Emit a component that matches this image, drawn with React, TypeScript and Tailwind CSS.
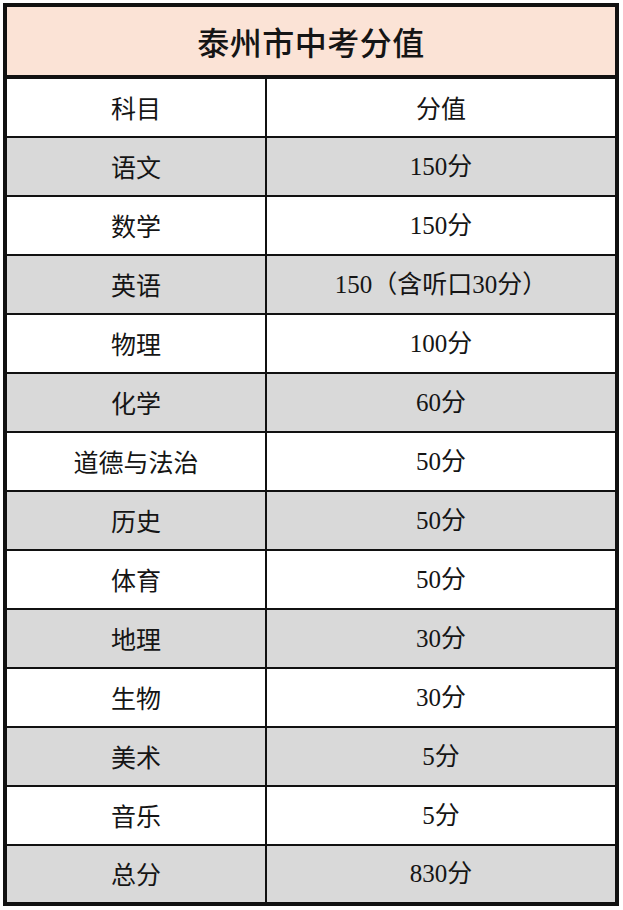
import React from "react";

type Row = {
  subject: string;
  score: string;
};

const rows: Row[] = [
  { subject: "科目", score: "分值" },
  { subject: "语文", score: "150分" },
  { subject: "数学", score: "150分" },
  { subject: "英语", score: "150（含听口30分）" },
  { subject: "物理", score: "100分" },
  { subject: "化学", score: "60分" },
  { subject: "道德与法治", score: "50分" },
  { subject: "历史", score: "50分" },
  { subject: "体育", score: "50分" },
  { subject: "地理", score: "30分" },
  { subject: "生物", score: "30分" },
  { subject: "美术", score: "5分" },
  { subject: "音乐", score: "5分" },
  { subject: "总分", score: "830分" },
];

const App = () => {
  return (
    <div className="min-h-[910px] w-[623px] bg-white pl-[3px] pt-[3px] text-[#151515]">
      <div className="flex w-[616px] flex-col border-4 border-[#111]">
        <div className="flex h-[72px] shrink-0 items-center justify-center border-b-4 border-[#111] bg-[#fbe3d6] font-['Noto_Sans_CJK_SC',sans-serif] text-[32px] font-medium tracking-[0.5px]">
          泰州市中考分值
        </div>
        {rows.map(({ subject, score }, i) => (
          <div
            key={subject}
            className={`flex ${i % 2 === 1 ? "bg-[#d9d9d9]" : "bg-white"} ${
              i < rows.length - 1 ? "h-[59px] border-b-2 border-[#111]" : "h-[56px]"
            }`}
          >
            <div className="flex w-[260px] shrink-0 items-center justify-center border-r-2 border-[#111] font-['Noto_Sans_CJK_SC',sans-serif] text-[25px]">
              {subject}
            </div>
            <div className="flex flex-1 items-center justify-center font-['Liberation_Serif','Noto_Sans_CJK_SC',serif] text-[25px]">
              {i === 0 ? (
                <span className="font-['Noto_Sans_CJK_SC',sans-serif]">{score}</span>
              ) : (
                score
              )}
            </div>
          </div>
        ))}
      </div>
    </div>
  );
};

export default App;
